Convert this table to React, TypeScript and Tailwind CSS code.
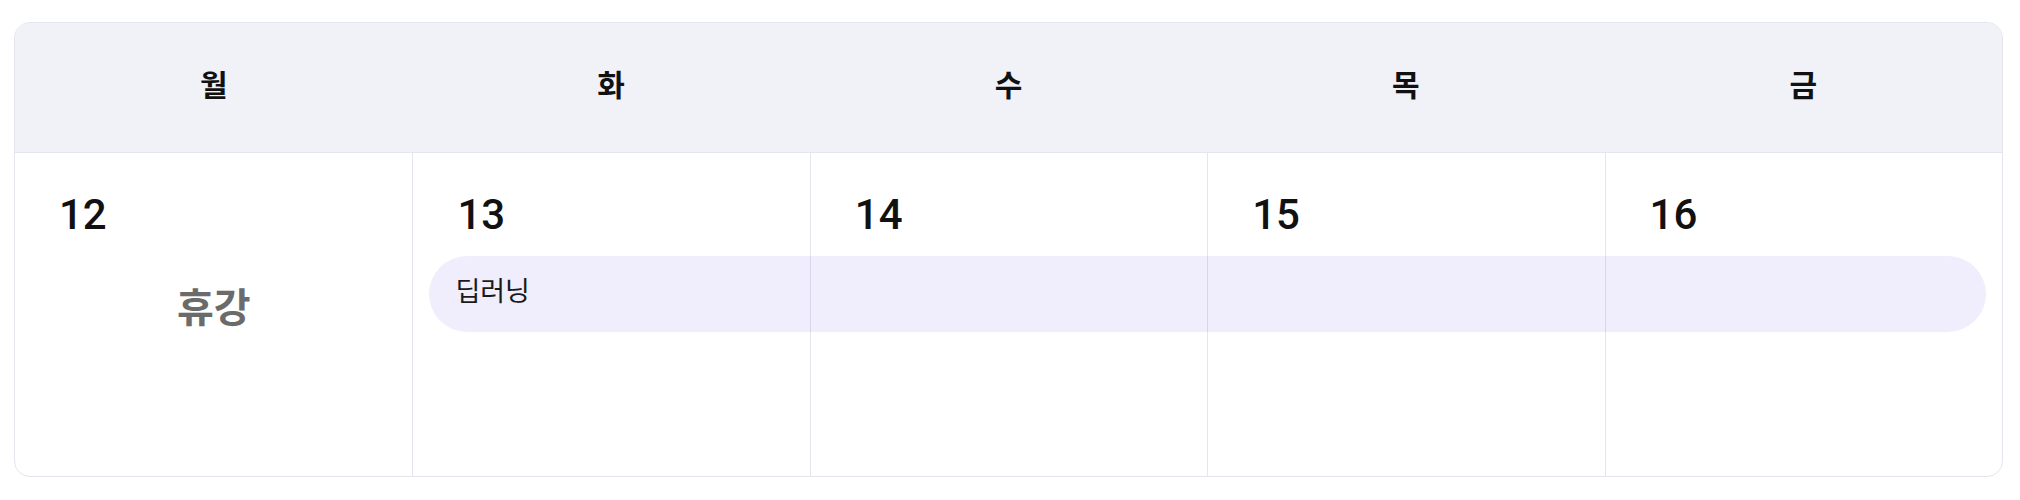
const days = ["월", "화", "수", "목", "금"];

export default function App() {
  return (
    <div className="min-h-screen bg-white pt-[22px] pl-[14px] font-['Roboto','Noto_Sans_CJK_KR',sans-serif] text-[#111]">
      <div className="w-[1989px] h-[455px] flex flex-col rounded-[16px] border border-[#e5e5ee] overflow-hidden bg-white">
        <div className="grid grid-cols-5 h-[130px] shrink-0 bg-[#f1f2f7] border-b border-[#e5e5ee]">
          {days.map((d) => (
            <div key={d} className="flex items-center justify-center pb-[4px] text-[30px] font-bold leading-none">
              {d}
            </div>
          ))}
        </div>

        <div className="flex-1 grid grid-cols-5 grid-rows-[103px_76px_1fr]">
          <div className="col-start-1 row-start-1 row-span-3 flex flex-col">
            <div className="pt-[41px] pl-[44px] text-[42px] font-medium leading-none">12</div>
            <div className="mt-[53px] text-center text-[40px] font-bold leading-none text-[#6b6b6b]">휴강</div>
          </div>
          <div className="col-start-2 row-start-1 row-span-3 border-l border-[#e5e5ee]">
            <div className="pt-[41px] pl-[44px] text-[42px] font-medium leading-none">13</div>
          </div>
          <div className="col-start-3 row-start-1 row-span-3 border-l border-[#e5e5ee]">
            <div className="pt-[41px] pl-[44px] text-[42px] font-medium leading-none">14</div>
          </div>
          <div className="col-start-4 row-start-1 row-span-3 border-l border-[#e5e5ee]">
            <div className="pt-[41px] pl-[44px] text-[42px] font-medium leading-none">15</div>
          </div>
          <div className="col-start-5 row-start-1 row-span-3 border-l border-[#e5e5ee]">
            <div className="pt-[41px] pl-[44px] text-[42px] font-medium leading-none">16</div>
          </div>

          <div className="col-start-2 col-span-4 row-start-2 ml-[17px] mr-[16px] flex items-center rounded-full bg-[#6a4ee6]/[0.1] pl-[26px] pb-[3px] text-[27px] leading-none text-[#1a1a1a]">
            딥러닝
          </div>
        </div>
      </div>
    </div>
  );
}
